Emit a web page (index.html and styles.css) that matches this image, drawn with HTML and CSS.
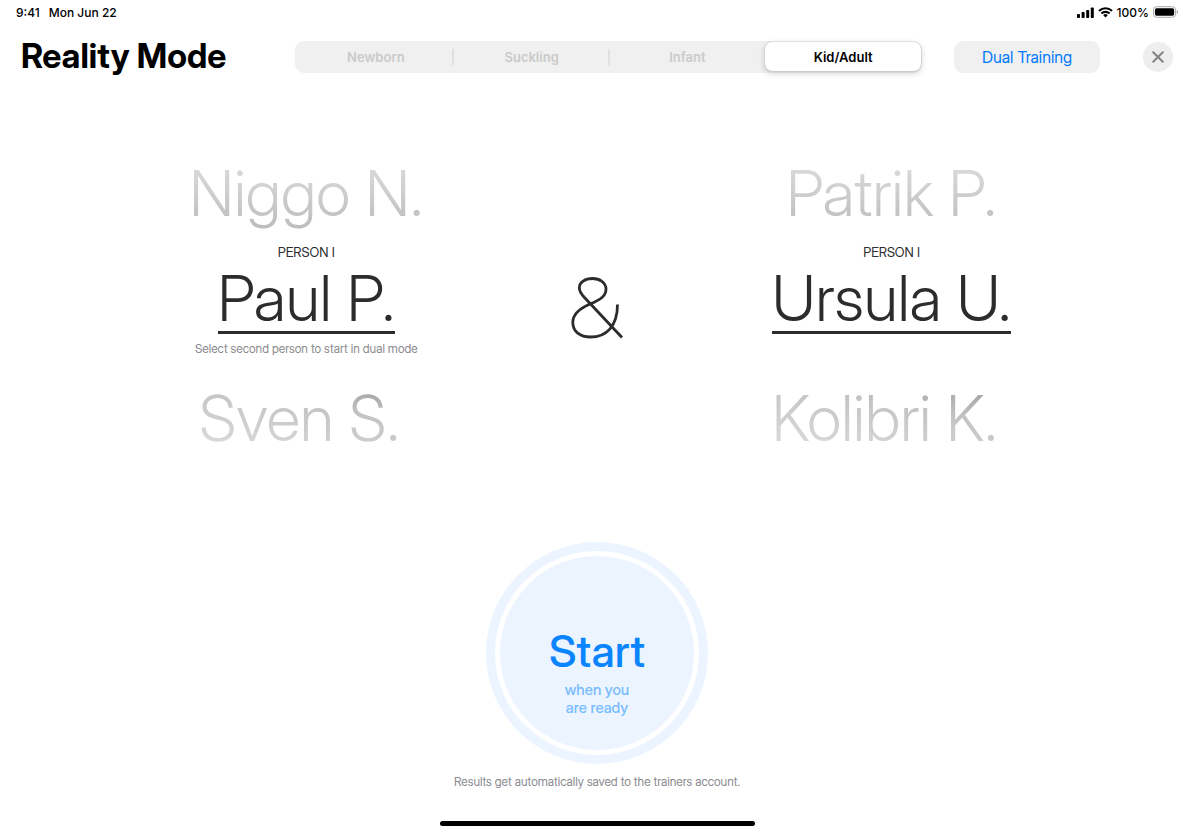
FILE: index.html
```html
<!DOCTYPE html>
<html lang="en">
<head>
  <meta charset="UTF-8">
  <meta name="viewport" content="width=device-width, initial-scale=1.0">
  <title>Reality Mode</title>
  <link rel="stylesheet" href="styles.css">
</head>
<body>
  <div class="status-bar">
    <span>9:41</span>
    <span>Mon Jun 22</span>
    <div class="status-right">
      <svg class="signal" width="17" height="11" viewBox="0 0 17 11">
        <rect x="0" y="7" width="3" height="4" rx="0.8"/>
        <rect x="4.6" y="5" width="3" height="6" rx="0.8"/>
        <rect x="9.2" y="3" width="3" height="8" rx="0.8"/>
        <rect x="13.8" y="0.5" width="3" height="10.5" rx="0.8"/>
      </svg>
      <svg class="wifi" width="15" height="11" viewBox="0 0 15 11">
        <path d="M7.5 2.3c2.1 0 4 .8 5.5 2.2.1.1.3.1.4 0l1.100-1.100c.1-.1.1-.3 0-.4a10.200 10.200 0 0 0-14 0c-.1.1-.1.3 0 .4l1.100 1.100c.1.1.3.1.4 0A8 8 0 0 1 7.500 2.300z"/>
        <path d="M7.500 5.900c1.100 0 2.200.4 3.100 1.200.1.1.3.1.4 0l1.100-1.100c.1-.1.1-.3 0-.4a6.700 6.700 0 0 0-9.200 0c-.1.1-.1.3 0 .4L4 7.100c.1.1.3.1.4 0 .9-.8 2-1.200 3.100-1.200z"/>
        <path d="M9.700 8.300c.1-.1.1-.3 0-.4a3.400 3.400 0 0 0-4.400 0c-.1.1-.1.3 0 .4l1.900 1.900c.2.2.4.2.6 0z"/>
      </svg>
      <span class="battery-text">100%</span>
      <svg width="25" height="12" viewBox="0 0 26 12">
        <rect x="0.500" y="0.500" width="23" height="11" rx="3.200" fill="none" stroke="#a6a6a6"/>
        <rect x="2" y="2" width="20" height="8" rx="1.800"/>
        <path d="M24.700 4v4c.8-.3 1.300-1.100 1.300-2s-.5-1.700-1.300-2z" fill="#a6a6a6"/>
      </svg>
    </div>
  </div>

  <header class="header">
    <h1>Reality Mode</h1>
    <div class="tabs">
      <button type="button">Newborn</button>
      <button type="button">Suckling</button>
      <button type="button">Infant</button>
      <button type="button" class="active">Kid/Adult</button>
    </div>
    <button type="button" class="dual">Dual Training</button>
    <button type="button" class="close" aria-label="Close">
      <svg width="12" height="12" viewBox="0 0 12 12">
        <path d="M1.200 1.200l9.600 9.600M10.800 1.200l-9.600 9.600" fill="none" stroke="#838387" stroke-width="2" stroke-linecap="round"/>
      </svg>
    </button>
  </header>

  <main>
    <!-- trainee selection -->
    <div class="persons">
      <div class="picker">
        <button type="button" class="name prev">Niggo N.</button>
        <p class="label">PERSON I</p>
        <button type="button" class="name selected">Paul P.</button>
        <p class="note hint">Select second person to start in dual mode</p>
        <button type="button" class="name next">Sven S.</button>
      </div>
      <svg class="ampersand" width="54" height="62" viewBox="0 0 54 62">
        <path d="M50 60.500L12 20C8.500 16 7.300 13.500 7.300 10.700C7.300 5.400 13 1.500 20.500 1.500S34 6 34 12C34 18.500 29.500 22.500 17.500 27.300C5.500 32.500 0.800 38 0.800 45.500C0.800 54.500 8 60 18.500 60C34.500 60 45.500 49 45.500 27.500" fill="none" stroke="#2c2c2e" stroke-width="2.800"/>
      </svg>
      <div class="picker">
        <button type="button" class="name prev">Patrik P.</button>
        <p class="label">PERSON I</p>
        <button type="button" class="name selected">Ursula U.</button>
        <p class="note hint"></p>
        <button type="button" class="name next">Kolibri K.</button>
      </div>
    </div>

    <button type="button" class="start">
      <span class="start-inner">
        <span class="start-title">Start</span>
        <span class="start-text">when you<br>are ready</span>
      </span>
    </button>
    <p class="note">Results get automatically saved to the trainers account.</p>
  </main>

  <div class="home-indicator"></div>
</body>
</html>
```

FILE: styles.css
```css
* {
  box-sizing: border-box;
}
body {
  margin: 0;
  min-height: 100vh;
  display: flex;
  flex-direction: column;
  background-color: #fff;
  color: #000;
  font-family: "Inter Display", Inter, "Liberation Sans", sans-serif;
}
button {
  border: none;
  padding: 0;
  background: none;
  color: inherit;
  font-family: inherit;
  cursor: pointer;
}
h1, p {
  margin: 0;
}
svg {
  display: block;
  overflow: visible;
}

.status-bar {
  display: flex;
  align-items: center;
  gap: 9px;
  height: 24px;
  padding: 0 16px;
  font-family: Inter, "Liberation Sans", sans-serif;
  font-size: 12px;
  font-weight: 500;
}
.status-right {
  display: flex;
  align-items: center;
  gap: 4px;
  margin-left: auto;
}

.header {
  display: flex;
  align-items: center;
  height: 66px;
  padding: 0 21px;
}
.header h1 {
  flex: 0 0 274px;
  padding-bottom: 3px;
  font-size: 34px;
  line-height: 40px;
  font-weight: 700;
}
.tabs {
  flex: 1;
  display: flex;
  height: 32px;
  padding: 1px 1px 2px 3px;
  border-radius: 9px;
  background-color: #f0f0f0;
}
.tabs button {
  flex: 1;
  position: relative;
  font-family: Inter, "Liberation Sans", sans-serif;
  font-size: 13px;
  font-weight: 600;
  color: #cacaca;
}
.tabs button:nth-child(2)::before,
.tabs button:nth-child(3)::before {
  content: "";
  position: absolute;
  left: -2px;
  top: 7px;
  width: 2px;
  height: 16px;
  background-color: #e0e0e0;
}
.tabs .active {
  border-radius: 7px;
  background-color: #fff;
  color: #000;
  box-shadow: 0 0 1px rgba(0,0,0,0.3), 0 2px 6px rgba(0,0,0,0.2);
}
.dual {
  width: 146px;
  height: 32px;
  margin-left: 32px;
  border-radius: 9px;
  background-color: #f0f0f0;
  color: #007aff;
  font-size: 16px;
}
.close {
  display: flex;
  align-items: center;
  justify-content: center;
  width: 30px;
  height: 30px;
  margin-left: 43px;
  border-radius: 50%;
  background-color: #eeeeef;
}

main {
  flex: 1;
  display: flex;
  flex-direction: column;
  align-items: center;
  padding-top: 63px;
}
.persons {
  display: grid;
  grid-template-columns: 1fr 1fr 1fr;
  justify-items: center;
  width: 100%;
  padding: 0 156px 0 160px;
}
.picker {
  display: flex;
  flex-direction: column;
  align-items: center;
}
.name {
  font-size: 63px;
  line-height: 80px;
  font-weight: 300;
  white-space: nowrap;
}
.prev {
  background: linear-gradient(#e0e0e0, #bbb);
  background-clip: text;
  -webkit-background-clip: text;
  color: transparent;
}
.next {
  padding-right: 14px;
  background: linear-gradient(10deg, #e0e0e0, #c4c4c4 60%, #909090);
  background-clip: text;
  -webkit-background-clip: text;
  color: transparent;
}
.label {
  margin-top: 11px;
  font-size: 13px;
  line-height: 16px;
  color: #2c2c2e;
}
.selected {
  height: 74px;
  border-bottom: 3px solid #2c2c2e;
  color: #2c2c2e;
  line-height: 76px;
}
.note {
  font-size: 12px;
  line-height: 16px;
  color: #8a8a8e;
}
.hint {
  height: 16px;
  margin: 7px 0 21px;
}
.ampersand {
  margin-top: 124px;
}

.start {
  width: 222px;
  height: 222px;
  margin: 84px 0 10px;
  padding: 9px;
  border-radius: 50%;
  background-color: #ecf5ff;
}
.start-inner {
  display: flex;
  flex-direction: column;
  align-items: center;
  height: 100%;
  padding-top: 66px;
  border: 5px solid #fff;
  border-radius: 50%;
}
.start-title {
  font-size: 44px;
  line-height: 58px;
  font-weight: 500;
  color: #0a84ff;
}
.start-text {
  margin-top: 1px;
  font-size: 15px;
  line-height: 18px;
  font-weight: 500;
  color: #78bbff;
}

.home-indicator {
  width: 315px;
  height: 5px;
  margin: 0 auto 8px;
  border-radius: 3px;
  background-color: #000;
}
```
